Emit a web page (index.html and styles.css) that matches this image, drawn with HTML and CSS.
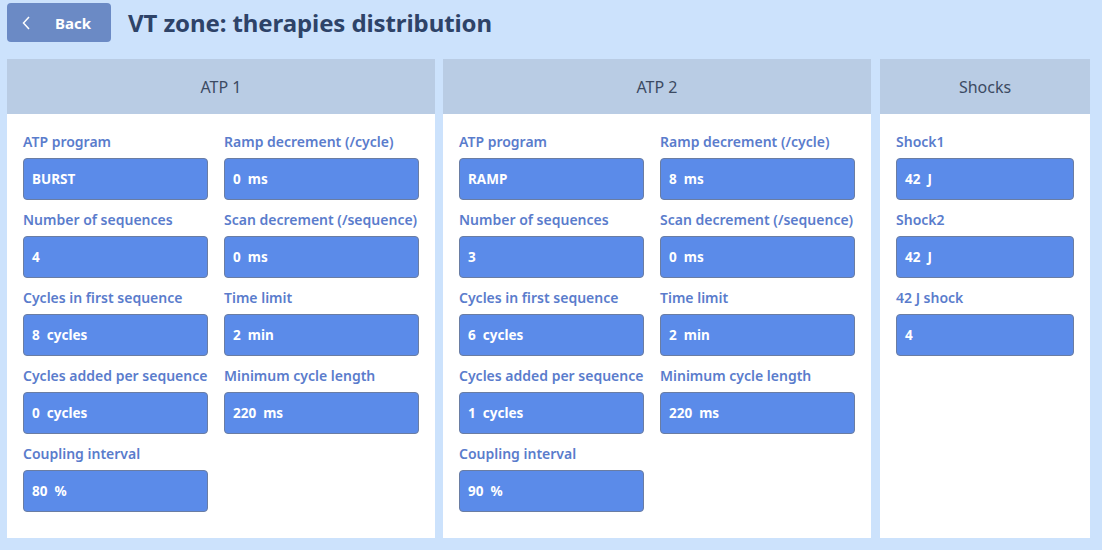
FILE: index.html
```html
<!DOCTYPE html>
<html>
<head>
<meta charset="utf-8">
<link rel="stylesheet" href="styles.css">
</head>
<body>
<div class="page">
  <div class="topbar">
    <button class="back">
      <svg class="chev" width="8" height="14" viewBox="0 0 8 14"><path d="M7 1 L1.5 7 L7 13" fill="none" stroke="#ffffff" stroke-width="1.5"/></svg>
      <span>Back</span>
    </button>
    <h1 class="title">VT zone: therapies distribution</h1>
  </div>
  <div class="panels">
    <section class="panel atp">
      <div class="panel-head">ATP 1</div>
      <div class="panel-body grid2">
        <div class="field"><div class="label">ATP program</div><div class="input">BURST</div></div>
        <div class="field"><div class="label">Ramp decrement (/cycle)</div><div class="input">0&nbsp; ms</div></div>
        <div class="field"><div class="label">Number of sequences</div><div class="input">4</div></div>
        <div class="field"><div class="label">Scan decrement (/sequence)</div><div class="input">0&nbsp; ms</div></div>
        <div class="field"><div class="label">Cycles in first sequence</div><div class="input">8&nbsp; cycles</div></div>
        <div class="field"><div class="label">Time limit</div><div class="input">2&nbsp; min</div></div>
        <div class="field"><div class="label">Cycles added per sequence</div><div class="input">0&nbsp; cycles</div></div>
        <div class="field"><div class="label">Minimum cycle length</div><div class="input">220&nbsp; ms</div></div>
        <div class="field"><div class="label">Coupling interval</div><div class="input">80&nbsp; %</div></div>
      </div>
    </section>
    <section class="panel atp">
      <div class="panel-head">ATP 2</div>
      <div class="panel-body grid2">
        <div class="field"><div class="label">ATP program</div><div class="input">RAMP</div></div>
        <div class="field"><div class="label">Ramp decrement (/cycle)</div><div class="input">8&nbsp; ms</div></div>
        <div class="field"><div class="label">Number of sequences</div><div class="input">3</div></div>
        <div class="field"><div class="label">Scan decrement (/sequence)</div><div class="input">0&nbsp; ms</div></div>
        <div class="field"><div class="label">Cycles in first sequence</div><div class="input">6&nbsp; cycles</div></div>
        <div class="field"><div class="label">Time limit</div><div class="input">2&nbsp; min</div></div>
        <div class="field"><div class="label">Cycles added per sequence</div><div class="input">1&nbsp; cycles</div></div>
        <div class="field"><div class="label">Minimum cycle length</div><div class="input">220&nbsp; ms</div></div>
        <div class="field"><div class="label">Coupling interval</div><div class="input">90&nbsp; %</div></div>
      </div>
    </section>
    <section class="panel shocks">
      <div class="panel-head">Shocks</div>
      <div class="panel-body grid1">
        <div class="field"><div class="label">Shock1</div><div class="input">42&nbsp; J</div></div>
        <div class="field"><div class="label">Shock2</div><div class="input">42&nbsp; J</div></div>
        <div class="field"><div class="label">42 J shock</div><div class="input">4</div></div>
      </div>
    </section>
  </div>
</div>
</body>
</html>
```
FILE: styles.css
```css
* { box-sizing: border-box; }
html, body {
  margin: 0;
  padding: 0;
  background: #cce2fc;
}
body {
  font-family: "Noto Sans", "Open Sans", sans-serif;
  width: 1102px;
  height: 550px;
  overflow: hidden;
}
.page {
  padding: 3px 12px 0 7px;
}
.topbar {
  display: flex;
  align-items: center;
  height: 39px;
  gap: 17px;
}
.back {
  width: 104px;
  height: 39px;
  border: none;
  border-radius: 4px;
  background: #6b8ac5;
  color: #ffffff;
  display: flex;
  align-items: center;
  padding: 0 0 0 15px;
  font-family: inherit;
  font-weight: 700;
  font-size: 15px;
  gap: 25px;
}
.chev { display: block; }
.title {
  margin: 0;
  font-size: 24px;
  font-weight: 700;
  color: #2e4368;
  letter-spacing: -0.1px;
}
.panels {
  display: flex;
  gap: 8px;
  margin-top: 17px;
  height: 479px;
}
.panel {
  background: #ffffff;
  display: flex;
  flex-direction: column;
}
.atp { width: 428px; }
.shocks { width: 210px; margin-left: 1px; }
.panel-head {
  height: 55px;
  background: #b9cce4;
  color: #3c4a62;
  font-size: 16px;
  display: flex;
  align-items: center;
  justify-content: center;
}
.panel-body {
  padding: 19px 16px 0 16px;
  display: grid;
  row-gap: 11px;
  align-content: start;
}
.grid2 {
  grid-template-columns: 185px 195px;
  column-gap: 16px;
}
.grid1 {
  grid-template-columns: 178px;
}
.field {
  display: flex;
  flex-direction: column;
  gap: 7px;
}
.label {
  color: #5a7ccc;
  font-weight: 600;
  font-size: 14px;
  line-height: 18px;
  white-space: nowrap;
}
.input {
  height: 42px;
  background: #5b8be9;
  border: 1px solid #6a7da3;
  border-radius: 4px;
  color: #ffffff;
  font-weight: 700;
  font-size: 13.5px;
  display: flex;
  align-items: center;
  padding-left: 8px;
}
```
